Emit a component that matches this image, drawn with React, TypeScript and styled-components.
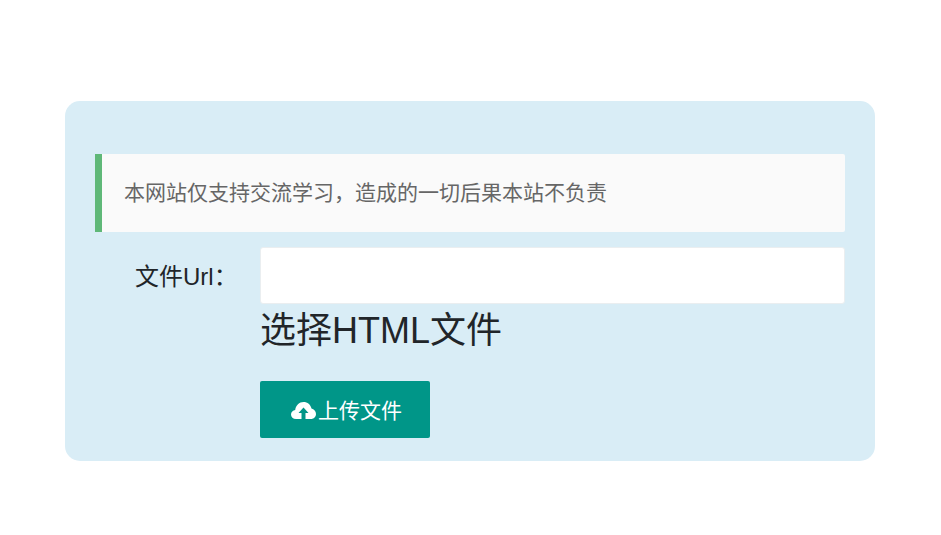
import React from 'react'
import styled, { createGlobalStyle } from 'styled-components'

const GlobalStyle = createGlobalStyle`
  html, body {
    margin: 0;
    padding: 0;
    background: #fff;
    font-family: 'Liberation Sans', 'Noto Sans CJK SC', sans-serif;
  }
  * {
    box-sizing: border-box;
  }
`

const Page = styled.div`
  width: 941px;
  height: 535px;
  padding-top: 101px;
  overflow: hidden;
`

const Card = styled.main`
  width: 810px;
  height: 360px;
  margin-left: 65px;
  padding: 53px 30px 0;
  background: #d9edf6;
  border-radius: 15px;
`

const Quote = styled.blockquote`
  margin: 0 0 15px;
  height: 78px;
  padding: 0 22px 4px;
  display: flex;
  align-items: center;
  background: #fafafa;
  border-left: 7px solid #5fb878;
  border-radius: 0 2px 2px 0;
  color: #666;
  font-size: 21px;
`

const FormRow = styled.div`
  display: flex;
  align-items: stretch;
`

const Label = styled.label`
  width: 165px;
  padding: 2px 0 0 40px;
  line-height: 56px;
  font-size: 24px;
  color: #212529;
  white-space: nowrap;
`

const Field = styled.div`
  flex: 1;
  min-width: 0;
`

const UrlInput = styled.input`
  display: block;
  width: 100%;
  height: 57px;
  padding: 0 10px;
  background: #fff;
  border: 1px solid #eaeef0;
  border-radius: 3px;
  outline: none;
`

const FileTitle = styled.h2`
  margin: 5px 0 28px;
  font-size: 36px;
  font-weight: 400;
  line-height: 44px;
  color: #212529;
`

const UploadButton = styled.button`
  display: flex;
  align-items: center;
  gap: 2px;
  width: 170px;
  height: 57px;
  padding: 0 0 2px 31px;
  background: #009688;
  border: none;
  border-radius: 2px;
  color: #fff;
  font-family: inherit;
  font-size: 21px;
  cursor: pointer;
`

const CloudIcon = styled.svg`
  width: 25px;
  height: 17px;
  margin-top: 4px;
  flex: none;
  fill: #fff;
`

export default function App() {
  return (
    <Page>
      <GlobalStyle />
      <Card>
        <Quote>本网站仅支持交流学习，造成的一切后果本站不负责</Quote>
        <FormRow>
          <Label htmlFor='file-url'>文件Url：</Label>
          <Field>
            <UrlInput id='file-url' type='text' />
            <FileTitle>选择HTML文件</FileTitle>
            <UploadButton type='button'>
              <CloudIcon viewBox='0 0 25 17'>
                <path d='M5 17C2 17 0 15 0 12.5 0 10 2 8.3 4.2 8 4.8 3.5 8.3 0 12.5 0 16.5 0 19.7 2.7 20.5 6.5 23 7 25 9.3 25 12 25 14.8 22.8 17 20 17H14.5V11H17.5L12.5 5.5 7.5 11H10.5V17Z' />
              </CloudIcon>
              上传文件
            </UploadButton>
          </Field>
        </FormRow>
      </Card>
    </Page>
  )
}
